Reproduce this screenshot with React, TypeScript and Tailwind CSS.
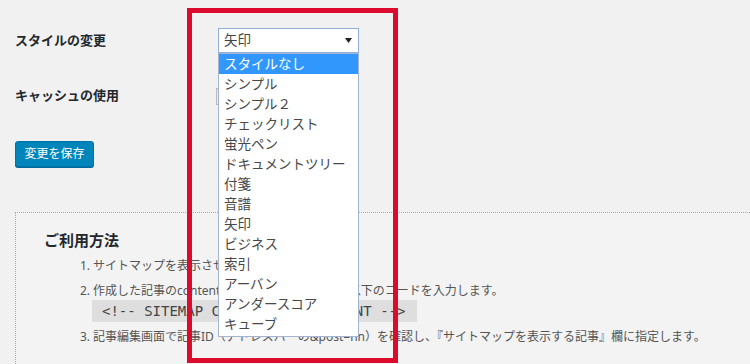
const styleOptions = [
  "スタイルなし",
  "シンプル",
  "シンプル２",
  "チェックリスト",
  "蛍光ペン",
  "ドキュメントツリー",
  "付箋",
  "音譜",
  "矢印",
  "ビジネス",
  "索引",
  "アーバン",
  "アンダースコア",
  "キューブ",
];

export default function App() {
  return (
    <div className="relative w-[750px] h-[364px] overflow-hidden bg-[#f1f1f1] text-[#23282d] font-['Noto_Sans','Noto_Sans_CJK_JP',sans-serif]">
      <div className="pl-[15px] pt-[28px]">
        <div className="flex items-center h-[25px]">
          <div className="w-[203px] text-[13px] font-bold">スタイルの変更</div>
          <div className="relative z-10">
            <div className="flex items-center justify-between w-[141px] h-[25px] border border-[#8fb0dc] bg-white pl-[5px] pr-[6px] text-[13.5px] text-[#444]">
              <span>矢印</span>
              <svg width="7" height="5" viewBox="0 0 7 5">
                <path d="M0 0 H7 L3.5 5 Z" fill="#222" />
              </svg>
            </div>
            <ul className="absolute left-0 top-[25px] w-[141px] border border-[#a3b4d2] bg-white pb-[2px] text-[13.5px] text-[#484848]">
              {styleOptions.map((opt, i) => (
                <li
                  key={opt}
                  className={
                    i === 0
                      ? "h-[20px] leading-[20px] pl-[5px] bg-[#3297fd] text-white"
                      : "h-[20px] leading-[20px] pl-[5px]"
                  }
                >
                  {opt}
                </li>
              ))}
            </ul>
          </div>
        </div>
        <div className="flex items-center h-[20px] mt-[33px]">
          <div className="w-[203px] text-[13px] font-bold">キャッシュの使用</div>
          <div className="-ml-[2px] w-[60px] h-[17px] border border-[#bbb] bg-[#e9e9e9]"></div>
        </div>
        <div className="flex mt-[35px]">
          <button className="h-[26px] w-[79px] rounded-[3px] border border-[#0073aa] bg-[#0085ba] text-[12px] text-white shadow-[0_1px_0_#006799]">
            変更を保存
          </button>
        </div>
      </div>

      <div className="ml-[15px] mt-[45px] h-[200px] border-t border-l border-dotted border-[#a8a8a8] bg-[#f3f3f3] pl-[28px] pt-[15px]">
        <h3 className="h-[24px] leading-[24px] text-[15px] font-bold">ご利用方法</h3>
        <ol className="ml-[36px] mt-[4px] text-[12px] text-[#555]">
          <li className="flex h-[20px] leading-[20px]">
            <span className="w-[13px]">1.</span>
            <span>サイトマップを表示させる記事を作成します。</span>
          </li>
          <li className="flex mt-[5px]">
            <span className="w-[13px] leading-[19px]">2.</span>
            <div>
              <p className="h-[19px] leading-[19px]">
                作成した記事のcontent欄（本文）に、HTMLで以下のコードを入力します。
              </p>
              <code className="block -ml-px w-[325px] h-[22px] leading-[22px] bg-[#dedede] pl-[10px] text-[14px] text-[#444] font-['DejaVu_Sans_Mono',monospace]">
                {"<!-- SITEMAP CONTENT REPLACEMENT -->"}
              </code>
            </div>
          </li>
          <li className="flex h-[20px] leading-[20px] mt-[5px]">
            <span className="w-[13px]">3.</span>
            <span>
              記事編集画面で記事ID（アドレスバーの&amp;post=nn）を確認し、『サイトマップを表示する記事』欄に指定します。
            </span>
          </li>
        </ol>
      </div>

      <div className="absolute left-[187px] top-[8px] w-[211px] h-[355px] border-[5px] border-[#dc0a2d] pointer-events-none z-20"></div>
    </div>
  );
}
